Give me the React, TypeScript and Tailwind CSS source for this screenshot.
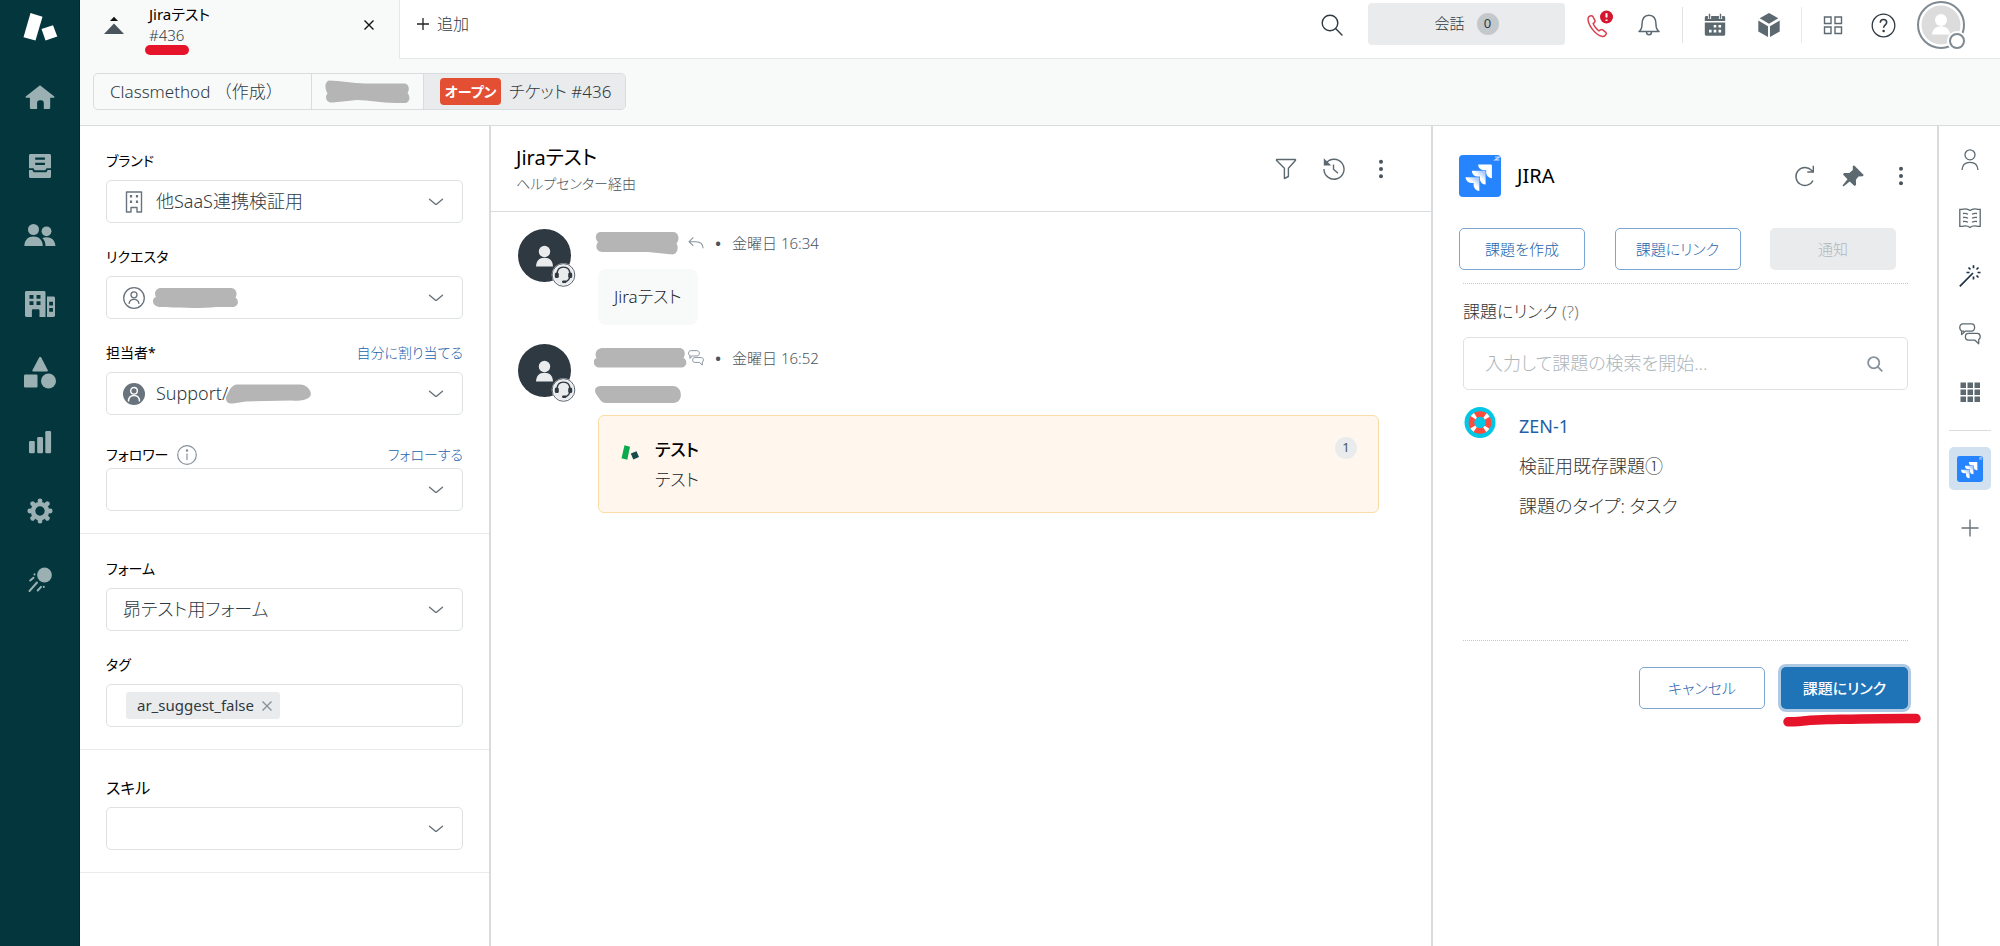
import React from 'react';
import { clsx } from 'clsx';

interface IconProps {
  className?: string;
}

/* ---------- shared drawings ---------- */

const ChevronDown = () => (
  <svg className="pointer-events-none h-2 w-4 shrink-0 text-[#68737d]" viewBox="0 0 16 8" fill="none" stroke="currentColor" strokeWidth="1.4" strokeLinecap="round">
    <path d="M1.5 1.2 7.2 6a1.2 1.2 0 0 0 1.6 0l5.7-4.8" />
  </svg>
);

const DotsIcon = () => (
  <svg className="h-5 w-5" viewBox="0 0 20 20" fill="#49545c">
    <circle cx="10" cy="2.8" r="2" />
    <circle cx="10" cy="10" r="2" />
    <circle cx="10" cy="17.2" r="2" />
  </svg>
);

const ChatIcon: React.FC<IconProps> = ({ className }) => (
  <svg className={className} viewBox="0 0 22 22" fill="none" stroke="currentColor" strokeWidth="1.3" strokeLinejoin="round">
    <path d="M5 8.2H3.6C2 8.2.8 6.500.8 4.400.8 2.300 2 .9 3.800.9h8.800c1.700 0 3 1.500 3 3.600s-1.200 3.700-3 3.700H6.200L2.600 11.600V8" />
    <path d="M9.400 10.400h8.800c1.800 0 3 1.300 3 3.200 0 1.300-.5 2.400-1.500 2.900v4.300l-4-3.700H9.400c-1.800 0-3-1.400-3-3.400 0-1.900 1.200-3.300 3-3.300Z" />
  </svg>
);

const JiraTile: React.FC<IconProps> = ({ className }) => (
  <svg className={className} viewBox="0 0 42 42">
    <defs>
      <linearGradient id="jiraFade" x1="1" y1="0" x2="0.3" y2="0.8">
        <stop offset="0.2" stopColor="#a9ccff" />
        <stop offset="0.6" stopColor="#ffffff" />
      </linearGradient>
    </defs>
    <rect width="42" height="42" rx="4" fill="#2684ff" />
    <g transform="translate(6.500 9.500) scale(1.1)">
      <path fill="#fff" d="M23.013 0H11.455a5.215 5.215 0 0 0 5.215 5.215h2.129v2.057A5.215 5.215 0 0 0 24 12.483V1.005A1.001 1.001 0 0 0 23.013 0Z" />
      <path fill="url(#jiraFade)" d="M17.294 5.757H5.736a5.215 5.215 0 0 0 5.215 5.214h2.129v2.058a5.218 5.218 0 0 0 5.215 5.214V6.758a1.001 1.001 0 0 0-1.001-1.001Z" />
      <path fill="url(#jiraFade)" d="M11.571 11.513H0a5.218 5.218 0 0 0 5.232 5.215h2.130v2.057A5.215 5.215 0 0 0 12.575 24V12.518a1.005 1.005 0 0 0-1.005-1.005Z" />
    </g>
    <path d="M36 2h4.500L36 5h4.500" fill="none" stroke="#cfe2ff" strokeWidth="1.100" />
  </svg>
);

// grey marker used to hide a name
const Redacted: React.FC<IconProps & { d: string; box: string }> = ({ className, d, box }) => (
  <svg className={className} viewBox={box} fill="#b5b5b5" aria-label="非表示">
    <path d={d} />
  </svg>
);

/* ---------- left navigation ---------- */

const navItems = [
  {
    label: 'ホーム',
    icon: (
      <path d="M16 4.200 30 15.200c.8.700.500 1.600-.500 1.600h-3.300v10c0 .7-.400 1.100-1.100 1.100h-5.300v-6c0-1.600-1-2.700-2.600-2.700h-1.500c-1.600 0-2.600 1.100-2.600 2.700v6H7c-.7 0-1.100-.4-1.100-1.100v-10H2.500c-1 0-1.300-.9-.5-1.600Z" />
    ),
  },
  {
    label: 'ビュー',
    icon: (
      <>
        <path fillRule="evenodd" d="M6.500 4h19c.8 0 1.500.7 1.500 1.500v12.700h-4.500l-1.200 2H10.700l-1.200-2H5V5.500C5 4.700 5.700 4 6.500 4Zm4.700 3.500v2.200h9.700V7.500Zm0 5.300V15h9.700v-2.200Z" />
        <path d="M5 20h3.300l1.300 2.200h12.800l1.300-2.200H27v6.500c0 .8-.7 1.500-1.500 1.500h-19c-.8 0-1.500-.7-1.500-1.500Z" />
      </>
    ),
  },
  {
    label: '顧客',
    icon: (
      <>
        <circle cx="9.500" cy="10.500" r="5.500" />
        <circle cx="22.500" cy="12.300" r="4.900" />
        <path d="M.3 26.500c.4-5.700 4-9 9.200-9s8.900 3.300 9.300 9c0 .300-.100.500-.5.500H.8c-.400 0-.5-.200-.5-.5Z" />
        <path d="M18.300 18.900c1.300-.4 2.600-.6 4.200-.6 5 0 8.300 2.900 8.900 8.100 0 .4-.100.600-.5.600h-9.400c0-3.400-.9-6.100-3.200-8.100Z" />
      </>
    ),
  },
  {
    label: '組織',
    icon: (
      <path fillRule="evenodd" d="M2.500 3H20c.8 0 1.500.6 1.500 1.400V29h-6v-6.500c0-.8-.6-1.300-1.400-1.300H9.300c-.8 0-1.400.5-1.400 1.300V29H2.500C1.700 29 1 28.400 1 27.600V4.400C1 3.600 1.700 3 2.500 3Zm3 4v3.700h4V7Zm7 0v3.700h4V7Zm-7 6.300V17h4v-3.700Zm7 0V17h4v-3.700ZM23 8.500h6.500c.8 0 1.500.600 1.500 1.400v17.700c0 .8-.7 1.400-1.500 1.400H23Zm2.200 5.300v3.700H29v-3.700Zm0 6.300v3.700H29v-3.700Z" />
    ),
  },
  {
    label: 'オブジェクト',
    icon: (
      <>
        <path d="M15.300.3c.5-.8 1.300-.8 1.800 0l6.600 12.800c.4.800.1 1.400-.8 1.400H9.300c-.9 0-1.200-.600-.8-1.400Z" />
        <rect x="0" y="17.500" width="13.500" height="13" rx="1.200" />
        <circle cx="24.500" cy="24" r="7.500" />
      </>
    ),
  },
  {
    label: 'レポート',
    icon: (
      <>
        <rect x="5" y="15" width="5.800" height="12.300" rx="1.200" />
        <rect x="13.200" y="11" width="5.800" height="16.300" rx="1.200" />
        <rect x="21.300" y="5" width="5.800" height="22.300" rx="1.200" />
      </>
    ),
  },
  {
    label: '管理',
    icon: (
      <>
        <circle cx="16" cy="16" r="7" fill="none" stroke="currentColor" strokeWidth="4.600" />
        <g stroke="currentColor" strokeWidth="4.800" strokeLinecap="round">
          <path d="M16 6V5.800M16 26v.2M6 16h-.2M26 16h.2M8.900 8.900l-.2-.2M23.100 8.900l.2-.2M8.900 23.100l-.2.2M23.100 23.100l.2.2" />
        </g>
      </>
    ),
  },
  {
    label: 'エクスプローラ',
    icon: (
      <>
        <circle cx="20.500" cy="11" r="7.400" />
        <g stroke="currentColor" strokeWidth="2" strokeLinecap="round">
          <path d="M9.500 13.700 6.200 16.500M13 18.500 5.500 27M17 22.800 13.700 26.500M10.500 10.300v.1M19.800 22.800v.1" />
        </g>
      </>
    ),
  },
];

const SideNav = () => (
  <nav className="flex w-20 shrink-0 flex-col border-r border-[#012a30] bg-[#03363d]">
    <a href="#top" aria-label="Zendesk" className="flex h-[62px] justify-center pt-3">
      <svg className="h-[30px] w-9" viewBox="22 12 36 30" fill="#fff">
        <path d="M30.500 13 42.500 16.700 35.500 40.500 23.500 37.200Z" />
        <path d="M41.500 29 53 25.300 57.300 36.500 45.500 40.500Z" />
      </svg>
    </a>
    {navItems.map((item) => (
      <a key={item.label} href="#nav" aria-label={item.label} className="flex h-[69px] items-center justify-center text-[#9bb0b3]">
        <svg className="h-8 w-8" viewBox="0 0 32 32" fill="currentColor">
          {item.icon}
        </svg>
      </a>
    ))}
  </nav>
);

/* ---------- top bar ---------- */

const TopBar = () => (
  <header className="flex h-[59px] bg-white">
    <div className="flex w-[319px] shrink-0 items-start bg-[#f8faf9] pl-6">
      <svg className="mt-4 h-5 w-5" viewBox="0 0 20 20" fill="#49545c">
        <path d="M10 7.500 20 18H0Z" />
        <path fill="#111" d="M10 .8 14 5H6Z" />
      </svg>
      <div className="relative ml-[25px] flex-1 pt-[3px]">
        <p className="text-[15px] leading-[22px] font-normal text-black">Jiraテスト</p>
        <p className="text-[15px] leading-5 text-[#2f3941]">#436</p>
        <span className="absolute top-[45px] -left-1 h-[10px] w-11 rounded-full bg-[#e6142b]" />
      </div>
      <button type="button" aria-label="タブを閉じる" className="mt-[19px] mr-6">
        <svg className="h-3 w-3" viewBox="0 0 12 12" stroke="#111" strokeWidth="1.400">
          <path d="m1.500 1.500 9 9m0-9-9 9" />
        </svg>
      </button>
    </div>

    <div className="flex min-w-0 flex-1 border-b border-l border-[#e4e8e9]">
      <button type="button" className="flex h-12 items-center gap-2 pl-[17px] text-base text-[#2f3941]">
        <svg className="h-3 w-3" viewBox="0 0 12 12" stroke="#222" strokeWidth="1.300">
          <path d="M6 0v12M0 6h12" />
        </svg>
        追加
      </button>

      <div className="ml-auto flex h-[50px] items-center pr-[35px] text-[#5c6970]">
        <button type="button" aria-label="検索">
          <svg className="h-[22px] w-[22px]" viewBox="0 0 22 22" fill="none" stroke="#2f3941" strokeWidth="1.400" strokeLinecap="round">
            <circle cx="9" cy="9" r="7.800" />
            <path d="m14.800 14.800 6.200 6.200" />
          </svg>
        </button>
        <button type="button" className="mb-[3px] ml-[25px] flex h-[42px] w-[197px] items-center justify-center gap-3 rounded-[4px] bg-[#e9ebed] text-[15px] text-[#2f3941]">
          会話
          <span className="flex h-[22px] w-[22px] items-center justify-center rounded-full bg-[#c2c8cc] text-[13px] font-normal text-[#2f3941]">0</span>
        </button>
        <button type="button" aria-label="通話" className="ml-[21px] pb-[2px]">
          <svg className="h-7 w-7" viewBox="0 0 28 28" fill="none" stroke="#d93f4c" strokeWidth="1.500">
            <path d="M2 9c0-2 1.800-3.300 3.300-3.300.8 0 1.200.3 1.600 1l2 3.600c.4.800.2 1.500-.4 2.100l-1.300 1.200c.5 1.800 3.300 5.700 5.700 7.200l1.600-1c.8-.500 1.500-.4 2.200.1l3.100 2.400c.7.600.8 1.200.3 2-1 1.600-2.500 2.500-4.500 2C8.600 24.300 2.300 15 2 9Z" />
            <circle cx="20.500" cy="7" r="6.500" fill="#d3172f" stroke="none" />
            <path d="M20.500 3.300v4.200M20.500 9.500V11" stroke="#fff" strokeWidth="2" />
          </svg>
        </button>
        <button type="button" aria-label="通知一覧" className="ml-6">
          <svg className="h-[22px] w-[22px]" viewBox="0 0 22 22" fill="none" stroke="currentColor" strokeWidth="1.500">
            <path d="M1 17.500c2.500-1.800 3-3.500 3-7C4 4.500 6.500 1.200 11 1.200s7 3.300 7 9.300c0 3.500.5 5.200 3 7ZM8.500 18c0 1.600.9 2.800 2.500 2.800s2.500-1.200 2.500-2.800" strokeLinejoin="round" />
          </svg>
        </button>
        <span className="ml-[22px] h-9 w-px bg-[#dfe3e5]" />
        <button type="button" aria-label="カレンダー" className="ml-5">
          <svg className="h-6 w-6" viewBox="0 0 24 24" fill="#5c6970">
            <path d="M3.500 3h17c1 0 1.700.700 1.700 1.700V8H1.800V4.700C1.800 3.700 2.500 3 3.500 3Z" />
            <path d="M1.800 9.500h20.400V21c0 1-.7 1.800-1.700 1.800h-17c-1 0-1.700-.8-1.700-1.800Z" />
            <path d="M6.500 1v5M17.500 1v5" stroke="#fff" strokeWidth="3.200" />
            <path d="M6.500.8v5M17.500.8v5" stroke="#5c6970" strokeWidth="1.400" />
            <path fill="#fff" d="M10.700 12h2.600v2.600h-2.600zM15.500 12h2.600v2.600h-2.600zM6 16.800h2.600v2.600H6zM10.700 16.800h2.600v2.600h-2.600zM15.500 16.800h2.600v2.600h-2.600z" />
          </svg>
        </button>
        <button type="button" aria-label="アプリ" className="ml-[30px]">
          <svg className="h-6 w-6" viewBox="0 0 24 24" fill="#5c6970">
            <path d="m12 0 9.300 5.300L12 10.800 2.700 5.300Z" />
            <path d="M1.300 7.500 11 13.300V24l-9.700-5.600Z" />
            <path d="M22.700 7.500 13 13.300V24l9.700-5.600Z" />
          </svg>
        </button>
        <span className="ml-5 h-9 w-px bg-[#e6e9eb]" />
        <button type="button" aria-label="製品" className="ml-[21px]">
          <svg className="h-5 w-5" viewBox="0 0 20 20" fill="none" stroke="currentColor" strokeWidth="1.400">
            <path d="M1.500 2h6.500v6.500H1.500zM12 2h6.500v6.500H12zM1.500 12h6.500v6.500H1.500zM12 12h6.500v6.500H12z" />
          </svg>
        </button>
        <button type="button" aria-label="ヘルプ" className="ml-[28px]">
          <svg className="h-[25px] w-[25px]" viewBox="0 0 25 25" fill="none" stroke="#2f3941" strokeWidth="1.300">
            <circle cx="12.500" cy="12.500" r="11.300" />
            <path d="M9.300 9.800c0-2 1.400-3.200 3.200-3.200 1.900 0 3.200 1.200 3.200 3 0 2.300-3.100 2.400-3.100 5.200" strokeWidth="1.500" />
            <circle cx="12.600" cy="17.900" r="0.600" fill="#2f3941" />
          </svg>
        </button>
        <button type="button" aria-label="プロフィール" className="relative ml-[21px] flex h-12 w-12 items-center justify-center rounded-full border-2 border-[#7e8992]">
          <svg className="h-10 w-10" viewBox="0 0 40 40">
            <circle cx="20" cy="20" r="19.500" fill="#dcdcdc" />
            <circle cx="20" cy="15" r="6" fill="#fff" />
            <path d="M11 29.500c.5-5.500 4-8.300 9-8.300s8.500 2.800 9 8.300Z" fill="#fff" />
          </svg>
          <span className="absolute -right-1 -bottom-1 h-5 w-5 rounded-full border-2 border-white bg-[#7e8992] p-[2px]">
            <span className="block h-full w-full rounded-full bg-white" />
          </span>
        </button>
      </div>
    </div>
  </header>
);

const Breadcrumbs = () => (
  <div className="border-b border-[#d8dcde] bg-[#f8faf9] px-[13px] pt-[14px] pb-[15px]">
    <div className="inline-flex h-[37px] items-stretch overflow-hidden rounded-[5px] border border-[#d8dcde] text-[17px] text-[#2f3941]">
      <button type="button" className="w-[218px] border-r border-[#d8dcde] pl-4 text-left [font-feature-settings:normal]">
        Classmethod （作成）
      </button>
      <button type="button" aria-label="リクエスタ" className="flex w-28 items-center justify-center border-r border-[#d8dcde]">
        <Redacted className="h-6 w-[86px]" box="0 0 86 24" d="M4 .5C15 1 28 3 40 3.500h39c5 0 6 6 3.500 9.500 3.500 4 2 9.500-2 10H70C56 23 44 20 32 20L8 22.500c-6 1-9-5-5.500-9C-.5 8-.5 2 4 .5Z" />
      </button>
      <button type="button" className="flex w-[201px] items-center gap-2 bg-[#e9ebed] pl-4">
        <span className="flex h-[27px] w-[61px] items-center justify-center rounded-[4px] bg-[#e34f32] text-sm font-bold text-white">オープン</span>
        チケット #436
      </button>
    </div>
  </div>
);

/* ---------- ticket fields ---------- */

interface FieldProps {
  id: string;
  label: string;
  value?: string;
  action?: string;
  info?: boolean;
  large?: boolean;
  leading?: React.ReactNode;
  trailing?: React.ReactNode;
}

const FieldHeader: React.FC<Pick<FieldProps, 'id' | 'label' | 'action' | 'info' | 'large'>> = ({ id, label, action, info, large }) => (
  <div className={clsx('flex h-[29px] items-start', info && 'pt-[6px]')}>
    <label htmlFor={id} className={clsx('leading-5 font-normal text-black', large ? 'text-base' : 'text-sm')}>
      {label}
    </label>
    {info && (
      <svg className="ml-2 h-5 w-5" viewBox="0 0 20 20" fill="none" stroke="#87929d" strokeWidth="1.200">
        <circle cx="10" cy="10" r="9.300" />
        <path d="M10 8.500v6.500" />
        <circle cx="10" cy="5.500" r="0.700" fill="#87929d" />
      </svg>
    )}
    {action && (
      <a href="#assign" className="ml-auto text-sm leading-5 text-[#2463ac]">
        {action}
      </a>
    )}
  </div>
);

const SelectField: React.FC<FieldProps> = ({ id, label, value = '', action, info, large, leading, trailing }) => (
  <div>
    <FieldHeader id={id} label={label} action={action} info={info} large={large} />
    <div className="flex h-[43px] items-center rounded-[5px] border border-[#dde1e3] pr-[18px] pl-4">
      {leading}
      <select
        id={id}
        defaultValue={value}
        className={clsx('h-full appearance-none bg-transparent text-[18px] text-[#2f3941] outline-none', trailing ? 'field-sizing-content' : 'min-w-0 flex-1')}
      >
        <option value={value}>{value}</option>
      </select>
      {trailing}
      <span className="ml-auto">
        <ChevronDown />
      </span>
    </div>
  </div>
);

const buildingIcon = (
  <svg className="mr-[11px] h-[22px] w-[22px] shrink-0" viewBox="0 0 22 22" fill="none" stroke="#68737d" strokeWidth="1.400">
    <path d="M3.500 1h15v20h-4.500v-4.500H8V21H3.500Z" strokeLinejoin="round" />
    <path d="M8 4v2.500M14 4v2.500M8 9.500V12M14 9.500V12" strokeWidth="2.200" />
  </svg>
);

const TicketFields = () => (
  <aside className="w-[411px] shrink-0 border-r-2 border-[#d8dcde]">
    <section className="flex flex-col gap-6 border-b border-[#e9ebed] px-[26px] pt-[25px] pb-[22px]">
      <SelectField id="brand" label="ブランド" value="他SaaS連携検証用" leading={buildingIcon} />
      <SelectField
        id="requester"
        label="リクエスタ"
        leading={
          <>
            <svg className="h-[22px] w-[22px] shrink-0" viewBox="0 0 22 22" fill="none" stroke="#68737d" strokeWidth="1.300">
              <circle cx="11" cy="11" r="10.300" />
              <circle cx="11" cy="7.800" r="3" />
              <path d="M6 16.800c.4-3 2.200-4.500 5-4.500s4.600 1.500 5 4.500" />
            </svg>
            <Redacted className="ml-2 h-5 w-[85px] shrink-0" box="0 0 85 20" d="M7 0h71c5 0 7 6 4.500 9.500C87 13 84.500 19 80 19H63c-15 1.500-34 1-50 0H6C-1 18-2 11 3 9 .5 5 3 .5 7 0Z" />
          </>
        }
      />
      <SelectField
        id="assignee"
        label="担当者*"
        action="自分に割り当てる"
        value="Support/"
        leading={
          <svg className="mr-[11px] h-[22px] w-[22px] shrink-0" viewBox="0 0 22 22" fill="none" stroke="#fff" strokeWidth="1.400">
            <circle cx="11" cy="11" r="11" fill="#68737d" stroke="none" />
            <circle cx="11" cy="7.800" r="3.300" />
            <path d="M5.500 18.500c0-4 2-6 5.500-6s5.500 2 5.500 6" />
          </svg>
        }
        trailing={
          <Redacted className="-ml-[2px] h-5 w-[85px] shrink-0" box="0 0 85 20" d="M11 .5h63c8 0 14 9 9 13-4 3.500-11 3.500-18 3L20 17.500 7 19.500C-1 20-1 14 1.500 10 4 5 6 1 11 .5Z" />
        }
      />
      <SelectField id="followers" label="フォロワー" action="フォローする" info />
    </section>

    <section className="flex flex-col gap-6 border-b border-[#e9ebed] px-[26px] pt-[25px] pb-[22px]">
      <SelectField id="form" label="フォーム" value="昴テスト用フォーム" />
      <div>
        <FieldHeader id="tags" label="タグ" />
        <div className="flex h-[43px] items-center rounded-[5px] border border-[#dde1e3] px-[19px]">
          <span className="flex h-[27px] items-center gap-2 rounded-[3px] bg-[#e9ebed] pr-2 pl-[11px] text-[15px] font-normal text-[#2f3941]">
            ar_suggest_false
            <button type="button" aria-label="タグを削除">
              <svg className="h-[10px] w-[10px]" viewBox="0 0 10 10" stroke="#87929d" strokeWidth="1.400">
                <path d="m.5.5 9 9m0-9-9 9" />
              </svg>
            </button>
          </span>
          <input id="tags" type="text" className="min-w-0 flex-1 bg-transparent outline-none" />
        </div>
      </div>
    </section>

    <section className="border-b border-[#e9ebed] px-[26px] pt-[28px] pb-[22px]">
      <SelectField id="skill" label="スキル" large />
    </section>
  </aside>
);

/* ---------- conversation ---------- */

const AgentAvatar = () => (
  <svg className="h-[58px] w-[58px] shrink-0" viewBox="0 0 58 58">
    <circle cx="26.500" cy="26.500" r="26.500" fill="#2f3941" />
    <circle cx="26.500" cy="22.500" r="5.700" fill="#e9ebed" />
    <path d="M18 37.500c.3-5.500 3-8.700 8.500-8.700s8.200 3.200 8.500 8.700Z" fill="#e9ebed" />
    <circle cx="45.500" cy="46" r="11" fill="#e9ebed" stroke="#fff" strokeWidth="1.500" />
    <circle cx="45.500" cy="46" r="11.300" fill="none" stroke="#49545c" strokeWidth="0.900" />
    <path d="M39 45.500c0-4.500 2.500-7.300 6.500-7.300s6.500 2.800 6.500 7.300c0 4.500-1 7-5.500 7.300" fill="none" stroke="#2f3941" strokeWidth="1.300" />
    <rect x="36.800" y="43.500" width="4" height="5.500" rx="1.500" fill="#2f3941" />
    <rect x="50.200" y="43.500" width="4" height="5.500" rx="1.500" fill="#2f3941" />
    <rect x="44" y="51.500" width="4.500" height="2.500" rx="1.200" fill="#2f3941" />
  </svg>
);

interface MessageProps {
  time: string;
  name: React.ReactNode;
  channel: React.ReactNode;
  children: React.ReactNode;
}

const Message: React.FC<MessageProps> = ({ time, name, channel, children }) => (
  <article className="flex">
    <AgentAvatar />
    <div className="ml-[22px] flex-1">
      <div className="flex h-7 items-center text-[15px] text-[#49545c]">
        <span className="flex w-[90px]">{name}</span>
        {channel}
        <span className="w-7 text-center font-bold">•</span>
        <time>{time}</time>
      </div>
      {children}
    </div>
  </article>
);

const Conversation = () => (
  <main className="min-w-0 flex-1">
    <div className="flex h-[86px] items-start justify-between border-b border-[#d8dcde] pt-[18px] pr-10 pl-[25px]">
      <div>
        <h1 className="text-xl leading-7 font-normal text-black">Jiraテスト</h1>
        <p className="text-sm leading-6 text-[#49545c]">ヘルプセンター経由</p>
      </div>
      <div className="flex gap-[26px] pt-[14px] text-[#5c6970]">
        <button type="button" aria-label="フィルター">
          <svg className="h-[22px] w-[22px]" viewBox="0 0 22 22" fill="none" stroke="currentColor" strokeWidth="1.400" strokeLinejoin="round">
            <path d="M1.800 1.500h18.400c.4 0 .5.600.2 1l-7 7.700v8.300l-4 2V10.200l-7.800-7.700c-.3-.400-.2-1 .2-1Z" />
          </svg>
        </button>
        <button type="button" aria-label="履歴">
          <svg className="h-[22px] w-[22px]" viewBox="0 0 22 22" fill="none" stroke="currentColor" strokeWidth="1.400">
            <path d="M3 5.200A10 10 0 1 1 1 11M10.500 6.500v4.800l4.500 4" />
            <path d="M1.500 2V6.800h5Z" fill="currentColor" />
          </svg>
        </button>
        <button type="button" aria-label="チケットのオプション">
          <DotsIcon />
        </button>
      </div>
    </div>

    <div className="flex flex-col gap-[19px] pt-[17px] pr-[52px] pl-[27px]">
      <Message
        time="金曜日 16:34"
        name={<Redacted className="-ml-1 h-6 w-[86px]" box="0 0 86 24" d="M6 1h73c6 0 7 8 3.500 11.500 2.500 4 1 10.500-4 11L54 21H8c-6-.5-7-6.500-4-10C0 7 2 1.500 6 1Z" />}
        channel={
          <svg className="h-[14px] w-4" viewBox="0 0 18 14" fill="none" stroke="#87929d" strokeWidth="1.200">
            <path d="M6 .8 1.200 5.500 6 10.200M1.500 5.500H9c5 0 7.800 2.500 8 7.500" />
          </svg>
        }
      >
        <div className="mt-3 w-fit rounded-lg bg-[#f8faf9] px-4 py-[14px] text-[17px] leading-7 text-[#1c2329]">Jiraテスト</div>
      </Message>

      <Message
        time="金曜日 16:52"
        name={<Redacted className="-ml-1 h-5 w-[93px] shrink-0" box="0 0 93 20" d="M8 0h77c6 0 7 6 4.500 10C94 12 93 19 88 19.500H5C-1 19-2 12 2.500 10 0 5 3 .5 8 0Z" />}
        channel={<ChatIcon className="h-4 w-4 text-[#87929d]" />}
      >
        <Redacted className="mt-[14px] -ml-1 h-[17px] w-[87px]" box="0 0 87 17" d="M6 0h73c10 0 11 17 0 17H12C7 17 5 12 2 8 0 4 1 .5 6 0Z" />
        <div className="mt-3 flex items-start rounded-[6px] border border-[#fcdca6] bg-[#fff6ed] pt-[19px] pr-[21px] pb-[17px] pl-[22px]">
          <svg className="mt-[10px] h-[15px] w-[18px]" viewBox="0 0 18 15">
            <path d="M3.500.3 9 1.700 6.300 14.800.500 13.300Z" fill="#0ca94f" />
            <path d="M9.800 8.500 15.500 6.200 18 12 12.300 14.500Z" fill="#17494d" />
          </svg>
          <div className="ml-4 flex-1 text-[17px] leading-[30px]">
            <p className="font-medium text-black">テスト</p>
            <p className="text-[#1c2329]">テスト</p>
          </div>
          <span className="mt-[2px] flex h-[22px] w-[22px] items-center justify-center rounded-full bg-[#e9ebed] text-[13px] font-normal text-[#49545c]">1</span>
        </div>
      </Message>
    </div>
  </main>
);

/* ---------- Jira app ---------- */

const outlineButton = 'h-[42px] w-[126px] rounded-[5px] border border-[#7ba6d3] text-[15px] text-[#2463ac]';

const JiraPanel = () => (
  <aside className="w-[508px] shrink-0 border-x-2 border-[#d8dcde] px-[26px] pt-7">
    <div className="flex h-[43px] items-center text-[#5c6970]">
      <JiraTile className="h-[42px] w-[42px]" />
      <h2 className="ml-4 text-xl font-normal text-black">JIRA</h2>
      <button type="button" aria-label="再読み込み" className="ml-auto">
        <svg className="h-[22px] w-[22px]" viewBox="0 0 22 22" fill="none" stroke="currentColor" strokeWidth="1.400">
          <path d="M19 15.500A9 9 0 1 1 17.500 5.300L19.300 7M19.300.8V7h-6" />
        </svg>
      </button>
      <button type="button" aria-label="ピン留め" className="ml-[26px]">
        <svg className="h-[22px] w-[22px]" viewBox="0 0 22 22" fill="currentColor">
          <path d="m12 .3 9.700 9.700-.9 1.200-4.300.3-2.600 3.200.2 5.300-1.600 1-4.800-4.600L1.500 21.500.5 20.500l5-6.200L1 9.500l1-1.500 5.300.1L10.800 5V1.200Z" />
        </svg>
      </button>
      <button type="button" aria-label="アプリのオプション" className="ml-[27px]">
        <DotsIcon />
      </button>
    </div>

    <div className="mt-[31px] flex justify-between pr-[15px]">
      <button type="button" className={outlineButton}>課題を作成</button>
      <button type="button" className={outlineButton}>課題にリンク</button>
      <button type="button" disabled className="h-[42px] w-[126px] rounded-[5px] bg-[#e9ebed] text-[15px] text-[#b0b8be]">通知</button>
    </div>

    <form className="mt-[13px] mr-[3px] ml-1 border-t border-dotted border-[#c2c8cc] pt-4" onSubmit={(e) => e.preventDefault()}>
      <label htmlFor="issue-search" className="block text-[17px] leading-6 text-[#333]">
        課題にリンク <span className="text-[#777]">(?)</span>
      </label>
      <div className="mt-[13px] flex h-[53px] items-center rounded-[5px] border border-[#dde1e3] pr-6 pl-[21px]">
        <input
          id="issue-search"
          type="text"
          placeholder="入力して課題の検索を開始..."
          className="min-w-0 flex-1 bg-transparent text-[18px] outline-none placeholder:text-[#adb5bb]"
        />
        <svg className="h-4 w-4" viewBox="0 0 16 16" fill="none" stroke="#87929d" strokeWidth="1.800">
          <circle cx="6.700" cy="6.700" r="5.600" />
          <path d="m10.800 10.800 4.500 4.500" />
        </svg>
      </div>

      <div className="flex min-h-[250px] items-start pt-4">
        <svg className="ml-px h-8 w-8" viewBox="0 0 32 32" fill="none">
          <circle cx="16" cy="16.500" r="15.500" fill="#00c7e5" />
          <circle cx="16" cy="16.500" r="8.500" stroke="#ff4b3e" strokeWidth="5.600" />
          <circle cx="16" cy="16.500" r="8.500" stroke="#fff" strokeWidth="5.600" strokeDasharray="3.400 9.950" strokeDashoffset="-4.980" />
        </svg>
        <div className="ml-[23px] text-[18px] leading-10 text-[#333]">
          <p>
            <a href="#zen-1" className="font-normal text-[#1f5fa8]">ZEN-1</a>
          </p>
          <p>検証用既存課題①</p>
          <p>課題のタイプ: タスク</p>
        </div>
      </div>

      <div className="flex justify-end gap-4 border-t border-dotted border-[#c2c8cc] pt-[26px]">
        <button type="button" className={outlineButton}>キャンセル</button>
        <div className="relative">
          <button type="submit" className="h-[42px] w-[127px] rounded-[5px] bg-[#1f73b7] text-[15px] font-medium text-white ring-3 ring-[#aecae3]">
            課題にリンク
          </button>
          <svg className="absolute top-[46px] left-[2px] h-[14px] w-[138px]" viewBox="0 0 138 14" fill="none">
            <path d="M5 8.800c10 0 22-2 40-2.300s60-1.300 88-1" stroke="#e6142b" strokeWidth="9.500" strokeLinecap="round" />
          </svg>
        </div>
      </div>
    </form>
  </aside>
);

/* ---------- right rail ---------- */

const railItems = [
  {
    label: 'ユーザー',
    icon: (
      <>
        <circle cx="11" cy="5.800" r="5" />
        <path d="M3 21c.300-5 3.200-7.700 8-7.700s7.700 2.700 8 7.700" />
      </>
    ),
  },
  {
    label: 'ナレッジ',
    icon: (
      <path d="M11 3.500C9 1.800 6 1.500 3 2.300V1.700M11 3.500c2-1.700 5-2 8-1.200h2.200v17H19c-3-.700-6-.5-8 1.200-2-1.700-5-1.900-8-1.200H.8v-17H3M4 6.500c1.800-.4 3.500-.1 5 .7M4 10.500c1.800-.4 3.500-.1 5 .7M4 14.500c1.800-.4 3.500-.1 5 .7M18 6.500c-1.800-.4-3.500-.1-5 .7M18 10.500c-1.800-.4-3.500-.1-5 .7M18 14.500c-1.800-.4-3.500-.1-5 .7" />
    ),
  },
  {
    label: 'マクロ',
    icon: (
      <path stroke="#1c3144" strokeWidth="1.700" d="M.8 21.300 14 8M14.500.3v3M14.500 11.500v3M7.500 7.500h3M18.500 7.500h3M9.500 2.500l2 2M19.500 2.500l-2 2M19.500 12.500l-2-2" />
    ),
  },
  { label: '会話', icon: null },
  {
    label: 'アプリ一覧',
    icon: (
      <path stroke="none" fill="#5c6970" d="M1.500 1.500h5.500V7H1.500zM8.500 1.500H14V7H8.500zM15.500 1.500H21V7h-5.500zM1.500 8.500h5.500V14H1.500zM8.500 8.500H14V14H8.500zM15.500 8.500H21V14h-5.500zM1.500 15.500h5.500V21H1.500zM8.500 15.500H14V21H8.500zM15.500 15.500H21V21h-5.500z" />
    ),
  },
];

const AppRail = () => (
  <nav className="flex w-[61px] shrink-0 flex-col items-center pt-[5px]">
    {railItems.map((item) => (
      <a key={item.label} href="#app" aria-label={item.label} className="flex h-[58px] w-full items-center justify-center text-[#5c6970]">
        {item.icon ? (
          <svg className="h-[22px] w-[22px]" viewBox="0 0 22 22" fill="none" stroke="currentColor" strokeWidth="1.300">
            {item.icon}
          </svg>
        ) : (
          <ChatIcon className="h-[22px] w-[22px]" />
        )}
      </a>
    ))}
    <span className="mt-[9px] h-px w-[42px] bg-[#d8dcde]" />
    <a href="#jira" aria-label="Jira" className="mt-4 flex h-[43px] w-[42px] items-center justify-center rounded-[5px] bg-[#d2e1ef]">
      <JiraTile className="h-[26px] w-[26px]" />
    </a>
    <button type="button" aria-label="アプリを追加" className="mt-[29px]">
      <svg className="h-[18px] w-[18px]" viewBox="0 0 18 18" stroke="#68737d" strokeWidth="1.400">
        <path d="M9 .5v17M.5 9h17" />
      </svg>
    </button>
  </nav>
);

export default function App() {
  return (
    <div className="flex min-h-screen bg-white font-['Noto_Sans','Noto_Sans_CJK_JP',sans-serif] font-light [font-feature-settings:'palt']">
      <SideNav />
      <div className="flex min-w-0 flex-1 flex-col">
        <TopBar />
        <Breadcrumbs />
        <div className="flex flex-1">
          <TicketFields />
          <Conversation />
          <JiraPanel />
          <AppRail />
        </div>
      </div>
    </div>
  );
}
